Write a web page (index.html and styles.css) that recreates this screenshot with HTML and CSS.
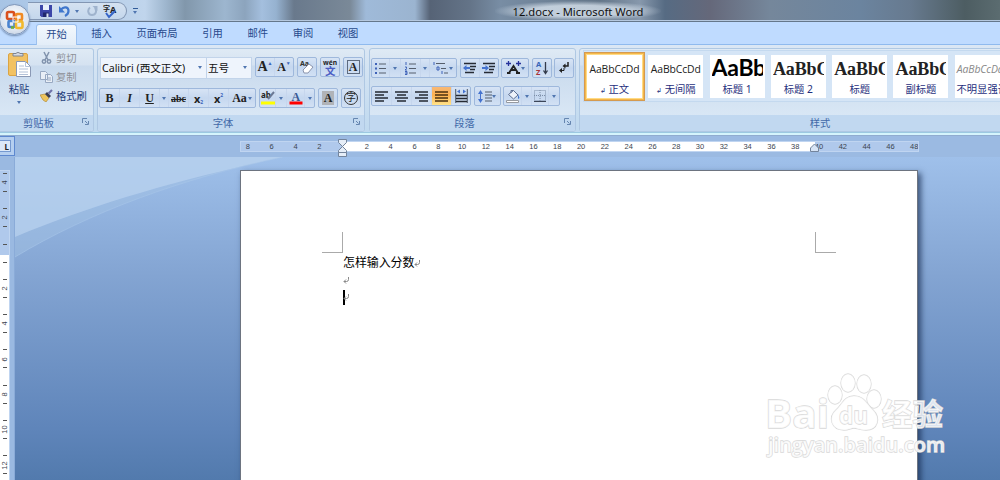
FILE: index.html
```html
<!DOCTYPE html>
<html lang="zh-CN">
<head>
    <meta charset="UTF-8">
    <meta name="viewport" content="width=device-width, initial-scale=1.0">
    <title>12.docx - Microsoft Word</title>
    <link rel="stylesheet" href="styles.css">
</head>
<body>
    <div class="window">
        <!-- Title bar -->
        <div class="title-bar">
            <div class="quick-access">
                <svg width="12" height="12" viewBox="0 0 12 12"><path d="M0 0h12v12H1.500L0 10.500z" fill="#3c46a8"/><path d="M3 0h6v5H3z" fill="#e9f0fb"/><path d="M3 7.500h6V12H3z" fill="#20286e"/><path d="M6.500 8.500h2V12h-2z" fill="#dde6f5"/></svg>
                <svg class="undo" width="11" height="12" viewBox="0 0 11 12"><path d="M2 4.500C5 1 9.500 2 9.500 6c0 2.500-1.500 4-3.500 5" fill="none" stroke="#4077cc" stroke-width="2.200"/><path d="M0 1v6.500h6z" fill="#4077cc"/></svg>
                <span class="caret"></span>
                <svg class="redo" width="11" height="12" viewBox="0 0 11 12"><path d="M3 2.500C0 5 1 10 5 10s5-4 3-7" fill="none" stroke="#9fb3cd" stroke-width="2"/><path d="M5.500 1h5v5z" fill="#9fb3cd"/></svg>
                <svg class="spell" width="14" height="15" viewBox="0 0 14 15"><text x="0" y="7" font-size="7" font-weight="bold" fill="#222">字</text><text x="7" y="9" font-size="9" font-weight="bold" fill="#222">A</text><path d="M3 9l3 4 6-6" fill="none" stroke="#3565c8" stroke-width="2"/></svg>
            </div>
            <div class="customize"><i></i><span class="caret"></span></div>
            <div class="title">12.docx - Microsoft Word</div>
        </div>

        <!-- Tabs -->
        <div class="tabs">
            <div class="tab active">开始</div>
            <div class="tab">插入</div>
            <div class="tab">页面布局</div>
            <div class="tab">引用</div>
            <div class="tab">邮件</div>
            <div class="tab">审阅</div>
            <div class="tab">视图</div>
        </div>

        <div class="office-button">
            <svg width="20" height="20" viewBox="0 0 20 20" fill="none" stroke-width="2.600">
                <rect x="2" y="2" width="7" height="7" rx="1.500" stroke="#d9501e"/>
                <rect x="11" y="4" width="6" height="6" rx="1" stroke="#f08a24"/>
                <rect x="3.500" y="11" width="6" height="6" rx="1" stroke="#4a83cf"/>
                <rect x="11" y="11.500" width="6.500" height="6.500" rx="1.500" stroke="#f1b92d"/>
                <path d="M9 17.500h-3" stroke="#6fae3c"/>
                <path d="M8 7h5v5H8z" stroke="#fff" stroke-width="1"/>
            </svg>
        </div>

        <!-- Ribbon -->
        <div class="ribbon">
            <div class="group clipboard">
                <div class="group-body">
                    <div class="paste">
                        <svg width="23" height="27" viewBox="0 0 23 27"><rect x="0.500" y="2.500" width="19" height="22" rx="1.500" fill="#f2c262" stroke="#dba443"/><path d="M5 5V2.500h3a2.500 2.500 0 0 1 4 0h3V5z" fill="#d6dbe3" stroke="#7c8492"/><path d="M8.500 10.500h9l5 5v10h-14z" fill="#fff" stroke="#8a99b5"/><path d="M17.500 10.500v5h5M11 15h5M11 18h9M11 21h9M11 23.500h9" fill="none" stroke="#b3c2d8"/></svg>
                        <span>粘贴</span>
                        <span class="caret"></span>
                    </div>
                    <div class="clip-list">
                        <div class="clip-item disabled">
                            <svg width="13" height="13" viewBox="0 0 13 13" fill="none" stroke="#8193ad" stroke-width="1.500"><path d="M4 1l4 8M9 1L5 9"/><circle cx="4" cy="10.500" r="1.700"/><circle cx="9" cy="10.500" r="1.700"/></svg>
                            <span>剪切</span>
                        </div>
                        <div class="clip-item disabled">
                            <svg width="13" height="13" viewBox="0 0 13 13" fill="#e8eef6" stroke="#98a9c2"><path d="M.5 1.500h5l2 2v6h-7zM5.500 4.500h5l2 2v6h-7z"/><path d="M7 8h4M7 10h4"/></svg>
                            <span>复制</span>
                        </div>
                        <div class="clip-item">
                            <svg width="13" height="13" viewBox="0 0 13 13"><path d="M0 6l5-1 4 4-3 4-3-2z" fill="#edc45b" stroke="#a9822e" stroke-width=".6"/><path d="M5 5l2-2 4 4-2 2z" fill="#3b3f52"/><path d="M8.500 4.500L12 1" stroke="#6d71a8" stroke-width="2.200"/></svg>
                            <span>格式刷</span>
                        </div>
                    </div>
                </div>
                <div class="group-label"><span>剪贴板</span><svg class="launcher" width="7" height="7" viewBox="0 0 7 7"><path d="M.5 5V.5H5M3 3l2.500 2.500M6.500 3v3.500H3" fill="none" stroke="#6686b0"/></svg></div>
            </div>

            <div class="group font">
                <div class="group-body">
                    <div class="row">
                        <div class="combo family"><span>Calibri (西文正文)</span><span class="caret"></span></div>
                        <div class="combo size"><span>五号</span><span class="caret"></span></div>
                        <div class="buttons resize">
                            <div class="btn w19 serif grow">A<sup>▲</sup></div>
                            <div class="btn w18 serif shrink">A<sup>▼</sup></div>
                        </div>
                        <div class="buttons">
                            <div class="btn w18"><svg width="16" height="16" viewBox="0 0 16 16"><text x="1" y="7" font-size="7" font-weight="bold" fill="#333">Aa</text><path d="M4 11l6-6 4 3-5 6H5z" fill="#fff" stroke="#8a94ad"/></svg></div>
                        </div>
                        <div class="buttons">
                            <div class="btn w18"><svg width="16" height="17" viewBox="0 0 16 17"><text x="1" y="6" font-size="6.500" font-weight="bold" fill="#222" textLength="14" lengthAdjust="spacingAndGlyphs">wén</text><text x="3" y="16" font-size="10.500" font-weight="bold" fill="#4a5dc4">文</text></svg></div>
                        </div>
                        <div class="buttons">
                            <div class="btn w18 serif"><span class="char-border">A</span></div>
                        </div>
                    </div>
                    <div class="row second">
                        <div class="buttons">
                            <div class="btn w20 serif">B</div>
                            <div class="btn w20 serif italic">I</div>
                            <div class="btn w20 serif under">U</div>
                            <div class="btn w9"><span class="caret"></span></div>
                            <div class="btn w20 serif strike">abc</div>
                            <div class="btn w20 sans">x<sub>2</sub></div>
                            <div class="btn w20 sans">x<sup>2</sup></div>
                            <div class="btn w26 serif aa">Aa<span class="caret"></span></div>
                        </div>
                        <div class="buttons">
                            <div class="btn w16"><svg width="16" height="16" viewBox="0 0 16 16"><text x="1" y="8" font-size="8" font-weight="bold" fill="#222">ab</text><path d="M8 9l6-7" stroke="#6b7995" stroke-width="2"/><path d="M1 11.500h14v3H1z" fill="#ff0"/></svg></div>
                            <div class="btn w11"><span class="caret"></span></div>
                            <div class="btn w18"><svg width="16" height="16" viewBox="0 0 16 16"><text class="serif-text" x="3.500" y="10.500" fill="#3a5a94">A</text><path d="M1.500 11.500h13v3h-13z" fill="#f00"/></svg></div>
                            <div class="btn w9"><span class="caret"></span></div>
                        </div>
                        <div class="buttons">
                            <div class="btn w18 serif"><span class="char-shade">A</span></div>
                        </div>
                        <div class="buttons">
                            <div class="btn w18"><span class="char-circle">字</span></div>
                        </div>
                    </div>
                </div>
                <div class="group-label"><span>字体</span><svg class="launcher" width="7" height="7" viewBox="0 0 7 7"><path d="M.5 5V.5H5M3 3l2.500 2.500M6.500 3v3.500H3" fill="none" stroke="#6686b0"/></svg></div>
            </div>

            <div class="group paragraph">
                <div class="group-body">
                    <div class="row">
                        <div class="buttons">
                            <div class="btn w18"><svg width="13" height="13" viewBox="0 0 13 13"><path d="M1 2h2M1 6.500h2M1 11h2" stroke="#3f62b8" stroke-width="2"/><path d="M5 2h7M5 6.500h7M5 11h7" stroke="#555e6c"/></svg></div>
                            <div class="btn w11"><span class="caret"></span></div>
                            <div class="btn w20"><svg width="13" height="13" viewBox="0 0 13 13"><path d="M2 0v3M1 5h1.500v1.500L1 8h2M1 9.500h2v3H1M1 11h2" fill="none" stroke="#3f62b8"/><path d="M5 2h7M5 6.500h7M5 11h7" stroke="#555e6c"/></svg></div>
                            <div class="btn w9"><span class="caret"></span></div>
                            <div class="btn w26"><svg width="16" height="13" viewBox="0 0 16 13"><path d="M1 0v3M4 5h2v3H4zM9 9v3" fill="none" stroke="#3f62b8"/><path d="M3 1.500h9M8 6.500h5M11 11h4" stroke="#555e6c"/></svg><span class="caret"></span></div>
                        </div>
                        <div class="buttons">
                            <div class="btn w19"><svg width="14" height="12" viewBox="0 0 14 12"><path d="M1 1.500h12M7 4.500h6M7 7.500h5M2 10.500h9" stroke="#262b35" stroke-width="1.500"/><path d="M0 6l3.500-3v2H7v2H3.500v2z" fill="#4573cf"/></svg></div>
                            <div class="btn w18"><svg width="14" height="12" viewBox="0 0 14 12"><path d="M1 1.500h12M7 4.500h6M7 7.500h5M2 10.500h9" stroke="#262b35" stroke-width="1.500"/><path d="M7 6L3.500 3v2H0v2h3.500v2z" fill="#4573cf"/></svg></div>
                        </div>
                        <div class="buttons">
                            <div class="btn w26"><svg width="15" height="14" viewBox="0 0 15 14"><path d="M1 12h3.500M10 12h4M3 12l4.500-7L12 12M5 9h5" fill="none" stroke="#222" stroke-width="1.800"/><path d="M2.500 0v5M0 2.500h5M12.500 0v5M10 2.500h5" stroke="#27339b" stroke-width="1.300"/></svg><span class="caret"></span></div>
                        </div>
                        <div class="buttons">
                            <div class="btn w18"><svg width="14" height="16" viewBox="0 0 14 16"><text x="1" y="7" font-size="7.500" font-weight="bold" fill="#3a64b8">A</text><text x="1" y="15" font-size="7.500" font-weight="bold" fill="#a83238">Z</text><path d="M10.500 2v11M8.500 10.500l2 3 2-3" fill="none" stroke="#333b4b" stroke-width="1.300"/></svg></div>
                        </div>
                        <div class="buttons">
                            <div class="btn w18"><svg width="12" height="12" viewBox="0 0 12 12"><path d="M10 0v4H6" fill="none" stroke="#222" stroke-width="1.500"/><path d="M7.500 1.500v5L4.500 4zM4 6v5L1 8.500z" fill="#222"/><path d="M3 8.500h3V6" fill="none" stroke="#222"/></svg></div>
                        </div>
                    </div>
                    <div class="row second">
                        <div class="buttons">
                            <div class="btn w20"><svg width="13" height="11" viewBox="0 0 13 11"><path d="M0 1h13M0 4h9M0 7h13M0 10h9" stroke="#252a33" stroke-width="1.500"/></svg></div>
                            <div class="btn w20"><svg width="13" height="11" viewBox="0 0 13 11"><path d="M0 1h13M2 4h9M0 7h13M2 10h9" stroke="#252a33" stroke-width="1.500"/></svg></div>
                            <div class="btn w20"><svg width="13" height="11" viewBox="0 0 13 11"><path d="M0 1h13M4 4h9M0 7h13M4 10h9" stroke="#252a33" stroke-width="1.500"/></svg></div>
                            <div class="btn w20 pressed"><svg width="13" height="11" viewBox="0 0 13 11"><path d="M0 1h13M0 4h13M0 7h13M0 10h13" stroke="#4b3210" stroke-width="1.500"/></svg></div>
                            <div class="btn w18"><svg width="13" height="14" viewBox="0 0 13 14"><path d="M.7 0v14M12.300 0v14" stroke="#4b5563"/><path d="M1 6.500h11M1 9.500h11M1 12.500h11" stroke="#252a33" stroke-width="1.700"/><path d="M2 2.500l3-2v4zM11 2.500l-3-2v4z" fill="#4573cf"/></svg></div>
                        </div>
                        <div class="buttons">
                            <div class="btn w25"><svg width="14" height="13" viewBox="0 0 14 13"><path d="M2.500 0L5 4H3v5h2l-2.500 4L0 9h2V4H0z" fill="#4573cf"/><path d="M7 2h7M7 5h7M7 8h7M7 11h7" stroke="#555e6c"/></svg><span class="caret"></span></div>
                        </div>
                        <div class="buttons">
                            <div class="btn w18"><svg width="14" height="14" viewBox="0 0 14 14"><path d="M2.500 5.500l5-4 4.500 4.500-4.500 4z" fill="#edf2fa" stroke="#5c6f92"/><path d="M5 4V1.500h2.500" fill="none" stroke="#5c6f92"/><path d="M12 5l1.500 4-1.500 1z" fill="#3d72ca"/><path d="M.5 11.500h12v2H.5z" fill="#fff" stroke="#969aa0"/></svg></div>
                            <div class="btn w10"><span class="caret"></span></div>
                            <div class="btn w17"><svg width="12" height="12" viewBox="0 0 12 12"><path d="M.5.5h11v10H.5zM6 0v11M0 5.500h12" fill="none" stroke="#7d8ea8" stroke-dasharray="1 1"/><path d="M0 11.500h12" stroke="#3c4658"/></svg></div>
                            <div class="btn w10"><span class="caret"></span></div>
                        </div>
                    </div>
                </div>
                <div class="group-label"><span>段落</span><svg class="launcher" width="7" height="7" viewBox="0 0 7 7"><path d="M.5 5V.5H5M3 3l2.500 2.500M6.500 3v3.500H3" fill="none" stroke="#6686b0"/></svg></div>
            </div>

            <div class="group styles">
                <div class="group-body">
                    <div class="gallery">
                        <div class="style-item selected"><div class="sample">AaBbCcDd</div><div class="name"><small>↲</small> 正文</div></div>
                        <div class="style-item"><div class="sample">AaBbCcDd</div><div class="name"><small>↲</small> 无间隔</div></div>
                        <div class="style-item"><div class="sample heading1">AaBb</div><div class="name">标题 1</div></div>
                        <div class="style-item"><div class="sample heading2">AaBbC</div><div class="name">标题 2</div></div>
                        <div class="style-item"><div class="sample heading2">AaBbC</div><div class="name">标题</div></div>
                        <div class="style-item"><div class="sample heading2">AaBbC</div><div class="name">副标题</div></div>
                        <div class="style-item"><div class="sample subtle">AaBbCcDd</div><div class="name">不明显强调</div></div>
                    </div>
                </div>
                <div class="group-label"><span>样式</span><span class="launcher"></span></div>
            </div>
        </div>

        <!-- Horizontal ruler -->
        <div class="ruler-bar">
            <div class="tab-selector"><span>L</span></div>
            <div class="ruler">
                <div class="ruler-marks">
                    <span>8</span><span>6</span><span>4</span><span>2</span><span></span><span>2</span><span>4</span><span>6</span><span>8</span><span>10</span><span>12</span><span>14</span><span>16</span><span>18</span><span>20</span><span>22</span><span>24</span><span>26</span><span>28</span><span>30</span><span>32</span><span>34</span><span>36</span><span>38</span><span>40</span><span>42</span><span>44</span><span>46</span><span>48</span>
                </div>
            </div>
            <svg class="indent left" width="9" height="18" viewBox="0 0 9 18" fill="#e6eef8" stroke="#73849c"><path d="M.5.5h8v3l-4 4-4-4zM4.500 7.500l4 4v2h-8v-2zM.5 13.500h8v4h-8z"/></svg>
            <svg class="indent right" width="9" height="9" viewBox="0 0 9 9" fill="#d7e4f5" stroke="#73849c"><path d="M4.500 1l4 4v3.500h-8V5z"/></svg>
        </div>

        <!-- Document area -->
        <div class="workspace">
            <div class="v-ruler">
                <div class="v-marks">
                    <div><span>4</span></div>
                    <div><span>2</span></div>
                    <div><span></span></div>
                    <div><span>2</span></div>
                    <div><span>4</span></div>
                    <div><span>6</span></div>
                    <div><span>8</span></div>
                    <div><span>10</span></div>
                    <div><span>12</span></div>
                </div>
            </div>
            <div class="canvas">
                <svg class="swoosh" width="270" height="102" viewBox="0 0 270 102">
                    <path d="M0 0H268C165 22 75 55 0 100z" fill="#a5c4e4" fill-opacity=".45"/>
                    <path d="M0 0H268C155 25 80 47 0 80z" fill="#bfd7f1" fill-opacity=".6"/>
                    <path d="M268 0C165 22 75 55 0 100" fill="none" stroke="#a9c6ea" stroke-opacity=".6"/>
                </svg>
                <div class="page">
                    <div class="margins"><i class="corner-left"></i><i class="corner-right"></i></div>
                    <div class="text">
                        <p>怎样输入分数<svg class="mark" width="7" height="7" viewBox="0 0 7 7"><path d="M5.500 0v2.500q0 2-2 2H1M3 2.500l-2 2 2 2" fill="none" stroke="#888"/></svg></p>
                        <p><svg class="mark" width="7" height="7" viewBox="0 0 7 7"><path d="M5.500 0v2.500q0 2-2 2H1M3 2.500l-2 2 2 2" fill="none" stroke="#888"/></svg></p>
                        <p class="current"><svg class="mark" width="7" height="7" viewBox="0 0 7 7"><path d="M5.500 0v2.500q0 2-2 2H1M3 2.500l-2 2 2 2" fill="none" stroke="#888"/></svg></p>
                    </div>
                </div>
            </div>
        </div>

        <!-- Watermark -->
        <svg class="watermark" width="200" height="95" viewBox="0 0 200 95">
            <g fill="#fff" fill-opacity=".8" stroke="#d9d9d9" stroke-width="1.300" paint-order="stroke">
                <text class="wm-latin" x="5" y="58" font-size="40" textLength="64" lengthAdjust="spacingAndGlyphs">Bai</text>
                <ellipse cx="75" cy="25" rx="7" ry="9"/>
                <ellipse cx="88" cy="13" rx="7" ry="9"/>
                <ellipse cx="104" cy="14" rx="7" ry="9"/>
                <ellipse cx="114" cy="29" rx="7" ry="9"/>
                <path d="M94 26c-10 0-12 9-18 14-8 7-5 20 8 20 5 0 7-2 10-2s5 2 12 2c12 0 15-12 7-20-7-7-9-14-19-14z"/>
                <text class="wm-latin" x="79" y="54" font-size="24" textLength="29" lengthAdjust="spacingAndGlyphs">du</text>
                <text class="wm-cjk" x="122" y="55" font-size="30" textLength="61" lengthAdjust="spacingAndGlyphs">经验</text>
                <text class="wm-url" x="8" y="82" font-size="19" textLength="177" lengthAdjust="spacingAndGlyphs">jingyan.baidu.com</text>
            </g>
        </svg>
    </div>
</body>
</html>
```

FILE: styles.css
```css
* {
    box-sizing: border-box;
    margin: 0;
    padding: 0;
}

body {
    font-family: "Noto Sans", "Noto Sans CJK SC", sans-serif;
    font-size: 10.3px;
    color: #1e3c78;
}

svg {
    display: block;
    flex-shrink: 0;
}

.window {
    position: relative;
    width: 1000px;
    height: 480px;
    overflow: hidden;
    display: flex;
    flex-direction: column;
}

.caret {
    width: 0;
    height: 0;
    flex-shrink: 0;
    border: 2.5px solid transparent;
    border-top: 3px solid #5076b0;
    border-bottom: 0;
}

/* Title bar */
.title-bar {
    height: 22px;
    flex-shrink: 0;
    display: flex;
    align-items: center;
    padding-left: 28px;
    border-bottom: 1px solid #65778b;
    box-shadow: inset 0 -1px 0 #b5c8df;
    background: linear-gradient(to right, #a7c4e5 0, #c0d5ec 145px, #9fb7cf 165px, #8197ab 185px, #9db6cf 225px, #8ca4bd 245px, #a4bfde 262px, #96b2d0 276px, #69798c 294px, #7a8998 350px, #9fbad9 366px, #9bb4d0 415px, #566376 430px, #647488 470px, #788da4 500px, #647689 600px, #8798ac 640px, #566b83 665px, #65687a 710px, #75879b 770px, #6b849f 860px, #677a8f 910px, #4d5d62 965px, #5b6c70 1000px);
}

.quick-access {
    width: 99px;
    height: 18px;
    margin-top: 1px;
    padding-left: 12px;
    display: flex;
    align-items: center;
    border: 1px solid #8296b3;
    border-left: 0;
    border-radius: 0 10px 10px 0;
    background: linear-gradient(#d5e2f1, #c4d7ec);
}

.undo {
    margin: 0 5px 0 7px;
}

.redo {
    margin: 0 5px 0 8px;
}

.customize {
    width: 5px;
    margin-left: 6px;
    display: flex;
    flex-direction: column;
    gap: 2px;
}

.customize i {
    height: 1px;
    background: #315b98;
}

.title {
    width: 166px;
    height: 20px;
    margin-left: 357px;
    line-height: 21px;
    font-size: 11.2px;
    color: #111;
    text-align: center;
    white-space: nowrap;
    background: radial-gradient(ellipse at center, rgba(222, 232, 242, 0.75) 40%, rgba(222, 232, 242, 0) 72%);
}

/* Tabs */
.tabs {
    height: 23px;
    flex-shrink: 0;
    display: flex;
    padding: 2px 0 0 36px;
    background: #bfdbff;
    border-bottom: 1px solid #8fbaee;
}

.tab {
    padding: 0 12.3px;
    line-height: 19px;
    color: #27498b;
}

.tab.active {
    width: 41px;
    height: 21px;
    padding: 0;
    margin-right: 2px;
    text-align: center;
    background: linear-gradient(#f3f8fd, #e3edf8);
    border: 1px solid #9cc0ee;
    border-bottom: 0;
    border-radius: 3px 3px 0 0;
}

.office-button {
    position: absolute;
    left: -1px;
    top: 4px;
    width: 31px;
    height: 31px;
    display: flex;
    align-items: center;
    justify-content: center;
    border-radius: 50%;
    border: 1px solid #8298b9;
    background: radial-gradient(circle at 50% 40%, #fff, #dde5f0 60%, #b6c6dc);
    box-shadow: 0 1px 2px #6f88ac;
}

/* Ribbon */
.ribbon {
    height: 90px;
    flex-shrink: 0;
    display: flex;
    padding-top: 3px;
    background: linear-gradient(#dbe7f4, #bfd9ef);
    border-bottom: 2px solid #d5f4fc;
    box-shadow: inset 0 -1px 0 #9cc9e1;
}

.group {
    height: 84px;
    flex-shrink: 0;
    display: flex;
    flex-direction: column;
    border: 1px solid #afc8e3;
    border-radius: 3px;
    background: linear-gradient(#dfeaf5, #d5e2f1 16px, #c9daed 17px, #d9e7f5 67px);
    overflow: hidden;
}

.group-body {
    height: 67px;
}

.group-label {
    height: 16px;
    display: flex;
    line-height: 16px;
    background: #c1d8f0;
    color: #4169a8;
}

.group-label span:first-child {
    flex: 1;
    text-align: center;
}

.launcher {
    width: 7px;
    margin: 3px 4px 0 5px;
}

.clipboard {
    width: 94px;
    margin-right: 3px;
    border-left: 0;
    border-radius: 0 3px 3px 0;
}

.clipboard .group-body {
    display: flex;
}

.paste {
    width: 38px;
    padding-top: 2px;
    display: flex;
    flex-direction: column;
    align-items: center;
}

.paste span:nth-child(2) {
    line-height: 23px;
}

.clip-list {
    margin-top: -1px;
}

.clip-item {
    height: 19px;
    display: flex;
    align-items: center;
    gap: 3px;
    margin-left: 2px;
}

.disabled {
    color: #8d9097;
}

.font {
    width: 268px;
    margin-right: 4px;
}

.row {
    display: flex;
    gap: 3px;
}

.font .group-body {
    padding: 8px 0 0 2px;
}

.font .second {
    margin: 9px 0 0 -1px;
}

.combo {
    height: 22px;
    display: flex;
    align-items: center;
    justify-content: space-between;
    padding: 0 4px 2px 1px;
    background: #eef4fc;
    border: 1px solid #c2d4ea;
    font-size: 10.6px;
    color: #111;
    white-space: nowrap;
}

.family {
    width: 107px;
}

.size {
    width: 46px;
    margin-left: -4px;
}

.buttons {
    height: 20px;
    flex-shrink: 0;
    display: flex;
    border: 1px solid #9eb8dc;
    border-radius: 2px;
    background: linear-gradient(#d7e4f5, #c5d7ef 50%, #d2e1f4);
}

.btn {
    display: flex;
    align-items: center;
    justify-content: center;
    border-right: 1px solid #c6d6ed;
    color: #222;
}

.btn:last-child {
    border-right: 0;
}

.w9 { width: 9px; }
.w10 { width: 10px; }
.w11 { width: 11px; }
.w16 { width: 16px; }
.w17 { width: 17px; }
.w18 { width: 18px; }
.w19 { width: 19px; }
.w20 { width: 20px; }
.w25 { width: 25px; }
.w26 { width: 26px; }

.serif,
.serif-text {
    font-family: "Liberation Serif", serif;
    font-size: 12px;
    font-weight: bold;
}

.sans {
    font-size: 11px;
    font-weight: bold;
}

.sans sub,
.sans sup {
    font-size: 5px;
    color: #3d65bb;
}

.grow {
    font-size: 14px;
}

.grow sup,
.shrink sup {
    font-size: 5px;
    color: #3d65bb;
    margin-top: -8px;
}

.sans sup {
    margin-top: -6px;
}

.sans sub {
    margin-top: 7px;
}

.italic {
    font-style: italic;
}

.under {
    text-decoration: underline;
}

.strike {
    font-size: 10px;
    text-decoration: line-through;
}

.aa .caret {
    margin-left: 1px;
}

.char-border {
    width: 13px;
    height: 14px;
    line-height: 13px;
    text-align: center;
    border: 1px solid #5d6b80;
}

.char-shade {
    width: 12px;
    height: 14px;
    line-height: 15px;
    text-align: center;
    background: #b0b3b8;
}

.char-circle {
    width: 14px;
    height: 14px;
    line-height: 11px;
    font-size: 10px;
    text-align: center;
    border: 1px solid #333;
    border-radius: 50%;
}

.paragraph {
    width: 207px;
    margin-right: 3px;
}

.paragraph .group-body {
    padding: 9px 0 0 1px;
}

.paragraph .second {
    margin-top: 8px;
}

.paragraph .row {
    gap: 2.5px;
}

.pressed {
    background: linear-gradient(#f7b877, #fdb24f 45%, #ffe48b);
}

.styles {
    width: 498px;
}

.styles .group-body {
    padding: 1px 0 0 3px;
}

.gallery {
    width: 478px;
    height: 52px;
    display: flex;
    gap: 6.3px;
    padding: 4px 0 0 3px;
    border: 1px solid #c4d9ef;
    background: #d5e5f6;
}

.style-item {
    width: 55px;
    height: 43px;
    flex-shrink: 0;
    background: #fff;
    overflow: hidden;
    text-align: center;
    white-space: nowrap;
}

.selected {
    box-shadow: 0 0 0 1px #ffdb85, 0 0 0 3px #f4b64a;
    outline: 1px solid #d49a50;
    outline-offset: 2px;
}

.sample {
    height: 27px;
    line-height: 28px;
    font-family: "Open Sans", sans-serif;
    font-size: 10.4px;
    color: #222;
    letter-spacing: -0.1px;
}

.sample.heading1 {
    font-family: Lato, sans-serif;
    font-size: 23px;
    line-height: 25px;
    font-weight: bold;
    color: #000;
    margin-left: 2px;
    width: 51px;
    letter-spacing: -0.3px;
    overflow: hidden;
    text-align: left;
}

.sample.heading2 {
    font-family: "Liberation Serif", serif;
    font-size: 18px;
    font-weight: bold;
    letter-spacing: -0.1px;
    margin-left: 2px;
    width: 51px;
    overflow: hidden;
    text-align: left;
}

.sample.subtle {
    font-style: italic;
    color: #888;
    text-align: left;
    padding-left: 2px;
}

.name {
    line-height: 15px;
    color: #1f2f7d;
}

.name small {
    font-size: 7px;
}

/* Rulers */
.ruler-bar {
    position: relative;
    height: 22px;
    flex-shrink: 0;
    display: flex;
    background: #9bbae2;
    border-top: 1px solid #91acd0;
}

.tab-selector {
    width: 15px;
    height: 20px;
    padding: 3px 3px 3px 0;
    border: 1px solid #5d88cf;
    border-left: 0;
    background: #b5cff0;
}

.tab-selector span {
    display: block;
    height: 12px;
    line-height: 12px;
    padding-right: 1px;
    font-size: 8px;
    font-weight: bold;
    color: #222;
    text-align: right;
    border: 1px solid #7599d0;
    border-left: 0;
    background: #dce9f9;
}

.ruler {
    width: 679px;
    height: 11px;
    margin: 5px 0 0 225px;
    overflow: hidden;
    border: 1px solid #c0d5f1;
    background: linear-gradient(to right, #b0c9ec 102px, #fff 102px, #fff 574px, #b0c9ec 574px);
}

.ruler-marks {
    display: flex;
    margin-left: -5px;
}

.ruler-marks span {
    width: 23.81px;
    flex-shrink: 0;
    text-align: center;
    font-family: "Liberation Sans", sans-serif;
    font-size: 7.5px;
    line-height: 9px;
    color: #3c4450;
}

.indent {
    position: absolute;
}

.indent.left {
    left: 338px;
    top: 3px;
}

.indent.right {
    left: 810px;
    top: 7px;
}

.workspace {
    height: 323px;
    display: flex;
}

.v-ruler {
    width: 15px;
    padding-top: 13px;
    background: #9ab9e1;
    border-right: 1px solid #8aabd8;
}

.v-marks {
    width: 10px;
    height: 310px;
    overflow: hidden;
    border-top: 1px solid #c0d5f1;
    border-right: 1px solid #c0d5f1;
    background: linear-gradient(#b0c9ec 84px, #fff 84px);
}

.v-marks div {
    height: 35.3px;
    display: flex;
    align-items: center;
    justify-content: center;
    background: linear-gradient(#555, #555) 3px 8px / 4px 1px no-repeat, linear-gradient(#555, #555) 3px 26px / 4px 1px no-repeat;
}

.v-marks div:first-child {
    margin-top: -6px;
}

.v-marks span {
    font-family: "Liberation Sans", sans-serif;
    font-size: 7.5px;
    line-height: 9px;
    color: #3c4450;
    transform: rotate(-90deg);
}

/* Document */
.canvas {
    position: relative;
    flex: 1;
    padding: 13px 0 0 225px;
    background: linear-gradient(#9fc0ea, #83a4d2 37%, #5f85ba 84%, #527aad);
}

.swoosh {
    position: absolute;
    left: 0;
    top: 0;
}

.page {
    position: relative;
    width: 678px;
    height: 320px;
    background: #fff;
    border: 1px solid #6d7480;
    box-shadow: 3px 3px 6px rgba(20, 40, 75, 0.7);
}

.margins {
    display: flex;
    justify-content: space-between;
    padding: 61px 81px 0;
}

.margins i {
    width: 21px;
    height: 21px;
    border-bottom: 1px solid #aaa;
}

.corner-left {
    border-right: 1px solid #aaa;
}

.corner-right {
    border-left: 1px solid #aaa;
}

.text {
    padding: 0 0 0 102px;
}

.text p {
    height: 17.5px;
    display: flex;
    align-items: center;
    font-family: "Noto Sans CJK SC", sans-serif;
    font-size: 12px;
    line-height: 17px;
    letter-spacing: -0.1px;
    color: #000;
}

.mark {
    margin-top: 3px;
}

.current .mark {
    margin-left: -2px;
    margin-top: 0;
}

.text .current {
    height: 15px;
    margin-top: 2px;
    border-left: 2px solid #000;
}

.watermark {
    position: absolute;
    left: 760px;
    top: 370px;
}

.wm-latin,
.wm-url {
    font-family: "Open Sans", sans-serif;
    font-weight: bold;
}

.wm-cjk {
    font-family: "Noto Sans CJK SC", sans-serif;
    font-weight: bold;
}

.wm-url {
    font-weight: 600;
}
```
